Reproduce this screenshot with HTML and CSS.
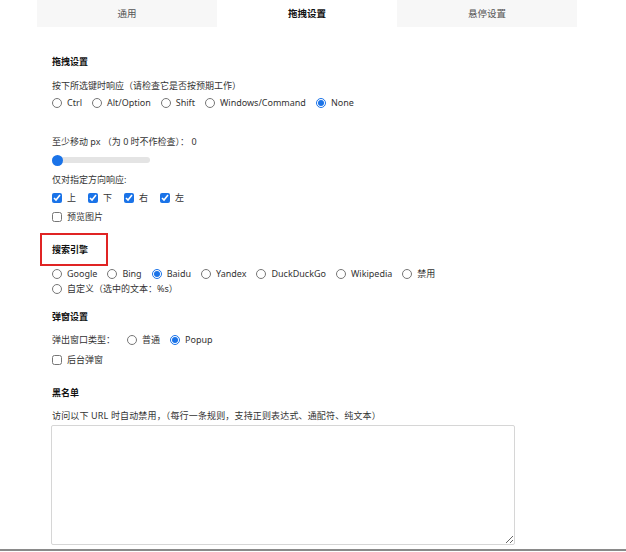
FILE: index.html
```html
<!DOCTYPE html>
<html lang="zh">
<head>
  <meta charset="UTF-8">
  <title>设置</title>
  <link rel="stylesheet" href="styles.css">
</head>
<body>
  <div class="wrap">
    <div class="tabs">
      <div class="tab">通用</div>
      <div class="tab active">拖拽设置</div>
      <div class="tab">悬停设置</div>
    </div>

    <div class="panel">
      <div class="title t-drag">拖拽设置</div>
      <div class="line sub">按下所选键时响应（请检查它是否按预期工作）</div>
      <div class="opts">
        <label><input type="radio" name="key">Ctrl</label>
        <label><input type="radio" name="key">Alt/Option</label>
        <label><input type="radio" name="key">Shift</label>
        <label><input type="radio" name="key">Windows/Command</label>
        <label><input type="radio" name="key" checked>None</label>
      </div>

      <div class="line move">至少移动 px （为 0 时不作检查）： 0</div>
      <input class="range" type="range" min="0" max="100" value="0">

      <div class="line dir">仅对指定方向响应:</div>
      <div class="opts checks">
        <label><input type="checkbox" checked>上</label>
        <label><input type="checkbox" checked>下</label>
        <label><input type="checkbox" checked>右</label>
        <label><input type="checkbox" checked>左</label>
      </div>
      <div class="opts preview">
        <label><input type="checkbox">预览图片</label>
      </div>

      <div class="title t-search marked">搜索引擎</div>
      <div class="opts engines">
        <label><input type="radio" name="se">Google</label>
        <label><input type="radio" name="se">Bing</label>
        <label><input type="radio" name="se" checked>Baidu</label>
        <label><input type="radio" name="se">Yandex</label>
        <label><input type="radio" name="se">DuckDuckGo</label>
        <label><input type="radio" name="se">Wikipedia</label>
        <label><input type="radio" name="se">禁用</label>
        <label><input type="radio" name="se">自定义（选中的文本：%s）</label>
      </div>

      <div class="title t-popup">弹窗设置</div>
      <div class="opts popup-type">
        <span class="lead">弹出窗口类型：</span>
        <label><input type="radio" name="pt">普通</label>
        <label><input type="radio" name="pt" checked>Popup</label>
      </div>
      <div class="opts bg">
        <label><input type="checkbox">后台弹窗</label>
      </div>

      <div class="title t-black">黑名单</div>
      <div class="line sub url">访问以下 URL 时自动禁用，（每行一条规则，支持正则表达式、通配符、纯文本）</div>
      <textarea class="rules"></textarea>
    </div>
  </div>
  <div class="edge"></div>
</body>
</html>
```

FILE: styles.css
```css
body { margin: 0; font-family: "Noto Sans", "Noto Sans CJK SC", sans-serif; font-size: 9px; color: #333; background: #fff; }
.wrap { margin-left: 37px; width: 540px; }

.tabs { display: flex; height: 27px; }
.tab { flex: 1; background: #f7f7f7; color: #555; text-align: center; line-height: 27px; font-size: 9.5px; }
.tab.active { background: #fff; color: #111; font-weight: bold; }

.panel { padding: 0 15px; }
.line { line-height: 14px; }
.title { font-weight: bold; color: #111; line-height: 14px; }
.t-drag { margin-top: 28px; }
.sub { margin-top: 10px; }

.opts { display: flex; flex-wrap: wrap; column-gap: 10px; line-height: 15px; margin-top: 2px; }
.opts label { display: inline-flex; align-items: center; }
.opts input { width: 10px; height: 10px; margin: 0 5px 0 0; accent-color: #1a73e8; }
.opts input[type=checkbox] { margin-right: 5px; }

.move { margin-top: 25px; }
.range { -webkit-appearance: none; appearance: none; display: block; width: 98px; height: 6px; margin: 8px 0 0; background: #e4e4e4; border-radius: 3px; }
.range::-webkit-slider-thumb { -webkit-appearance: none; width: 11px; height: 11px; border-radius: 50%; background: #1a73e8; }
.dir { margin-top: 10px; }
.checks { margin-top: 3px; column-gap: 12px; }
.preview { margin-top: 4px; }

.t-search { margin-top: 19px; }
.marked { position: relative; }
.marked::after { content: ""; position: absolute; left: -12px; top: -10px; width: 64px; height: 29px; border: 2px solid #e02424; }
.engines { margin-top: 9px; width: 440px; }

.t-popup { margin-top: 14px; }
.popup-type { margin-top: 8px; }
.lead { margin-right: 2px; }
.bg { margin-top: 5px; }

.t-black { margin-top: 19px; }
.url { margin-top: 9px; letter-spacing: 0.15px; }
.rules { display: block; width: 464px; height: 120px; margin: 2px 0 0 -1px; box-sizing: border-box; border: 1px solid #d6d6d6; border-radius: 2px; resize: both; }

.edge { margin-top: 4px; height: 2px; background: #8a8a8a; }
```
